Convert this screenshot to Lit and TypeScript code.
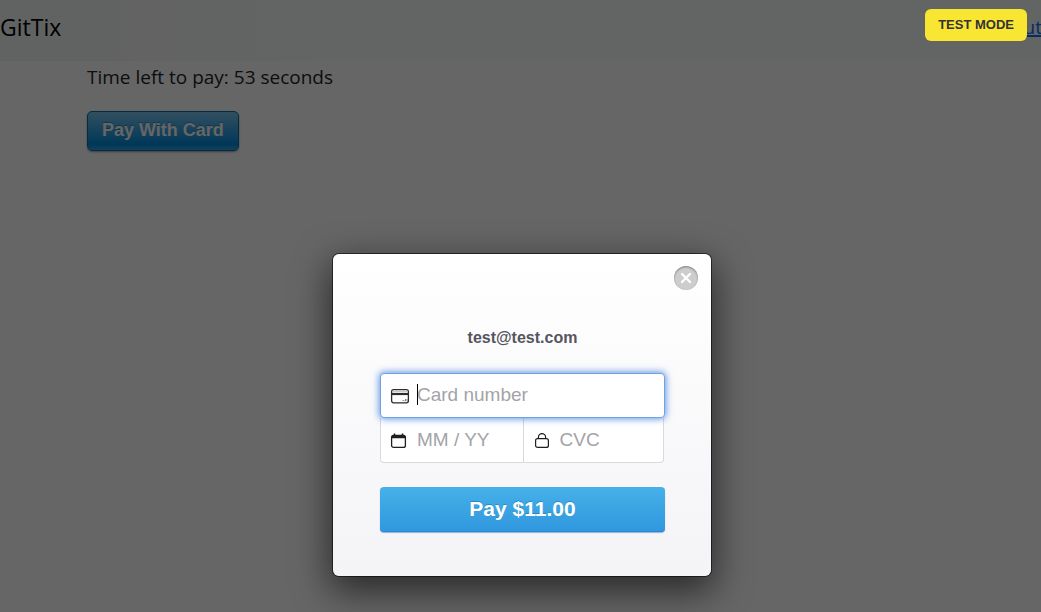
import { LitElement, html, css, svg } from "lit";
import { customElement, property } from "lit/decorators.js";

const cardIcon = svg`<svg class="icon" width="20" height="20" viewBox="0 0 20 20" fill="none" stroke="#2b2b30" aria-hidden="true">
  <rect x="1.6" y="3.6" width="16.8" height="13.2" rx="2" stroke-width="1.3"/>
  <path d="M2.3 5.6h15.4" stroke="#c4c4c8" stroke-width="1"/>
  <path d="M1.6 8h16.8" stroke-width="2.2"/>
  <path d="M12.5 14.5h1.4M15.5 13v2h-1M17 13v2" stroke-width=".8" stroke="#66666b"/>
</svg>`;

const calendarIcon = svg`<svg class="icon" width="20" height="20" viewBox="0 0 20 20" fill="none" stroke="#1f1f23" aria-hidden="true">
  <rect x="1.6" y="4.6" width="13.8" height="11.8" rx="2" stroke-width="1.3"/>
  <path d="M1.4 7.2V5.6a1.8 1.8 0 0 1 1.8-1.8h10.6a1.8 1.8 0 0 1 1.8 1.8v1.6z" fill="#1f1f23" stroke="none"/>
  <path d="M4.5 2.4v2.4M12.5 2.4v2.4" stroke-width="1.6"/>
</svg>`;

const lockIcon = svg`<svg class="icon" width="20" height="20" viewBox="0 0 20 20" fill="none" stroke="#1f1f23" stroke-width="1.2" aria-hidden="true">
  <rect x="2.6" y="7.6" width="12.8" height="8.8" rx="2"/>
  <path d="M5.4 7.6V6.2a3.6 3.6 0 0 1 7.2 0v1.4"/>
</svg>`;

@customElement("checkout-dialog")
export class CheckoutDialog extends LitElement {
  @property() email = "";
  @property() amount = "";

  static styles = css`
    :host {
      position: absolute;
      inset: 0;
      display: flex;
      justify-content: center;
      align-items: flex-end;
      padding: 0 0 36px 3px;
      box-sizing: border-box;
      background: rgba(0, 0, 0, 0.6);
      font-family: "Liberation Sans", Arial, sans-serif;
    }
    .badge {
      position: absolute;
      top: 9px;
      right: 14px;
      padding: 0 13px;
      border-radius: 6px;
      background: #f9e633;
      color: #333;
      font-size: 13px;
      font-weight: 700;
      line-height: 32px;
    }
    .dialog {
      position: relative;
      width: 378px;
      box-sizing: border-box;
      padding: 72px 46px 44px 47px;
      border-radius: 6px;
      background: linear-gradient(#fff, #f4f4f7);
      box-shadow: 0 0 0 1px rgba(0, 0, 0, 0.55), 0 12px 36px 3px rgba(0, 0, 0, 0.6);
    }
    .close {
      position: absolute;
      top: 12px;
      right: 13px;
      width: 24px;
      height: 24px;
      padding: 0;
      border: 0;
      border-radius: 50%;
      background: #cdcdcd;
      box-shadow: inset 0 1px 2px rgba(0, 0, 0, 0.4);
    }
    .close svg {
      display: block;
    }
    .email {
      margin: 0 0 24px;
      color: #55555f;
      font-size: 16px;
      font-weight: 700;
      line-height: 23px;
      text-align: center;
    }
    .fields {
      display: grid;
      grid-template-columns: minmax(0, 1fr) minmax(0, 1fr);
      margin-bottom: 24px;
    }
    .field {
      position: relative;
      display: flex;
      align-items: center;
      height: 45px;
      box-sizing: border-box;
      padding: 2px 0 0 9px;
      border: 1px solid #d9d9dd;
      border-top: 0;
      background: #fff;
    }
    .number {
      grid-column: 1 / -1;
      z-index: 1;
      padding-top: 0;
      border: 1px solid #71a3e4;
      border-radius: 4px;
      box-shadow: 0 0 7px 1px rgba(70, 130, 225, 0.85);
    }
    .expiry {
      border-bottom-left-radius: 4px;
      border-right: 0;
    }
    .cvc {
      border-bottom-right-radius: 4px;
      margin-right: 1px;
    }
    .icon {
      flex: none;
      margin-right: 7px;
    }
    input {
      flex: 1;
      min-width: 0;
      height: 40px;
      padding: 0 0 2px;
      border: 0;
      outline: 0;
      background: none;
      color: #333;
      font: 19px "Liberation Sans", Arial, sans-serif;
    }
    input::placeholder {
      color: #a3a3a8;
      opacity: 1;
    }
    .caret {
      position: absolute;
      left: 36px;
      top: 10px;
      width: 1px;
      height: 21px;
      background: #000;
    }
    .pay {
      display: block;
      width: 100%;
      height: 45px;
      padding: 0 0 1px;
      border: 0;
      border-radius: 4px;
      background: linear-gradient(#45b1e8, #3097de);
      box-shadow: inset 0 -1px 0 #2b87d3, 0 1px 1px rgba(50, 110, 190, 0.5);
      color: #fff;
      font: 700 21px "Liberation Sans", Arial, sans-serif;
      text-shadow: 0 -1px 0 rgba(0, 60, 120, 0.3);
    }
  `;

  render() {
    return html`
      <span class="badge">TEST MODE</span>
      <form class="dialog" role="dialog" aria-label="Payment" @submit=${(e: Event) => e.preventDefault()}>
        <button class="close" type="button" aria-label="Close">
          <svg width="24" height="24" viewBox="0 0 24 24" stroke="#fff" stroke-width="2.4" stroke-linecap="round">
            <path d="M8 8l8 8M16 8l-8 8" />
          </svg>
        </button>
        <p class="email">${this.email}</p>
        <div class="fields">
          <label class="field number">
            ${cardIcon}
            <input type="text" inputmode="numeric" aria-label="Card number" placeholder="Card number" />
            <span class="caret"></span>
          </label>
          <label class="field expiry">
            ${calendarIcon}
            <input type="text" aria-label="Expiry date" placeholder="MM / YY" />
          </label>
          <label class="field cvc">
            ${lockIcon}
            <input type="text" aria-label="Security code" placeholder="CVC" />
          </label>
        </div>
        <button class="pay" type="submit">Pay ${this.amount}</button>
      </form>
    `;
  }
}

@customElement("app-root")
export class AppRoot extends LitElement {
  static styles = css`
    :host {
      position: relative;
      display: block;
      min-height: 100vh;
      overflow: hidden;
      background: #fff;
      color: #212529;
      font-family: "Segoe UI", "Open Sans", sans-serif;
    }
    .bar {
      display: flex;
      justify-content: space-between;
      align-items: center;
      height: 61px;
      box-sizing: border-box;
      padding-bottom: 8px;
      background: linear-gradient(90deg, #f1f7f3, #f8f9fa 33%);
      white-space: nowrap;
    }
    .brand {
      color: #000;
      font-size: 23px;
      text-decoration: none;
    }
    .link {
      margin-right: -1px;
      color: #0d6efd;
      font-size: 19px;
      text-decoration-thickness: 2px;
    }
    .content {
      padding: 0 87px;
    }
    .timer {
      margin: 0 0 17px;
      font-size: 19px;
      line-height: 33px;
    }
    .open {
      height: 40px;
      padding: 0 14px 2px;
      border: 1px solid #0c6ba6;
      border-radius: 5px;
      background: linear-gradient(#7dc5ee, #008cdd 85%, #30a2e4);
      box-shadow: 0 1px 2px rgba(0, 0, 0, 0.4);
      color: #fff;
      font: 700 18px "Liberation Sans", Arial, sans-serif;
      text-shadow: 0 -1px 0 rgba(0, 0, 0, 0.25);
    }
  `;

  render() {
    return html`
      <nav class="bar">
        <a class="brand" href="#">GitTix</a>
        <a class="link" href="#">Sign Out</a>
      </nav>
      <main class="content">
        <p class="timer">Time left to pay: 53 seconds</p>
        <button class="open" type="button">Pay With Card</button>
      </main>
      <checkout-dialog email="test@test.com" amount="$11.00"></checkout-dialog>
    `;
  }
}
